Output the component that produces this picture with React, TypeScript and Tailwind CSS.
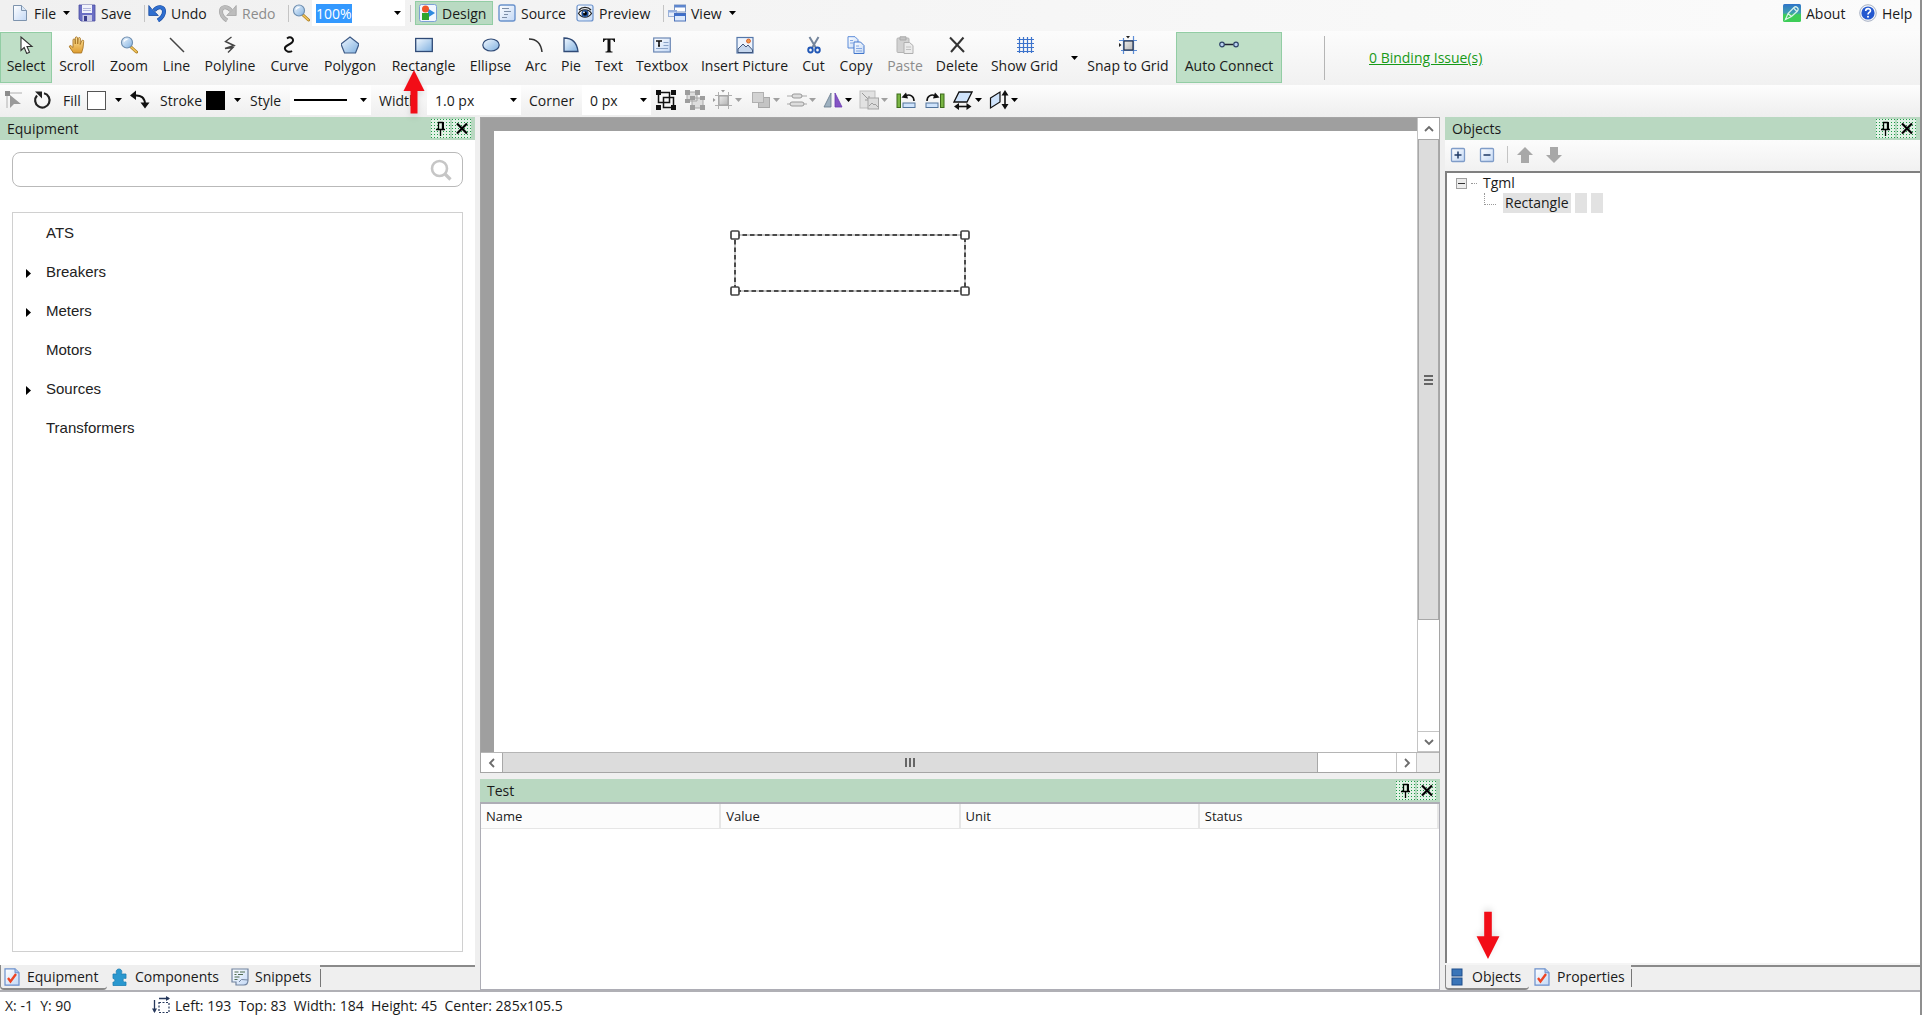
import React from "react";

type IconProps = { className?: string; children?: React.ReactNode; box?: string };

function Svg({ className = "size-[18px]", box = "0 0 18 18", children }: IconProps) {
  return (
    <svg viewBox={box} className={`${className} shrink-0`} fill="none" aria-hidden="true">
      {children}
    </svg>
  );
}

// gradients shared by all toolbar icons
function Gradients() {
  return (
    <svg width="0" height="0" className="absolute" aria-hidden="true">
      <defs>
        <linearGradient id="gBlue" x1="0" y1="0" x2="1" y2="1">
          <stop offset="0" stopColor="#f3f9ff" />
          <stop offset="1" stopColor="#7fb0e0" />
        </linearGradient>
        <linearGradient id="gSoft" x1="0" y1="0" x2="1" y2="1">
          <stop offset="0" stopColor="#ffffff" />
          <stop offset="1" stopColor="#c3d8f5" />
        </linearGradient>
        <linearGradient id="gGray" x1="0" y1="0" x2="1" y2="1">
          <stop offset="0" stopColor="#ececec" />
          <stop offset="1" stopColor="#b5b5b5" />
        </linearGradient>
        <linearGradient id="gHand" x1="0" y1="0" x2="0" y2="1">
          <stop offset="0" stopColor="#ffe6a0" />
          <stop offset="1" stopColor="#dd9c2e" />
        </linearGradient>
        <linearGradient id="gAbout" x1="0" y1="0" x2="0" y2="1">
          <stop offset="0" stopColor="#2f74c9" />
          <stop offset="0.5" stopColor="#3f9fb0" />
          <stop offset="0.6" stopColor="#3dcd58" />
          <stop offset="1" stopColor="#3dcd58" />
        </linearGradient>
        <pattern id="dots" width="3" height="3" patternUnits="userSpaceOnUse">
          <rect width="3" height="3" fill="#e2f2e6" />
          <rect width="1" height="1" fill="#1f9a48" />
        </pattern>
      </defs>
    </svg>
  );
}

function Caret({ className = "text-black" }: { className?: string }) {
  return (
    <svg viewBox="0 0 7 4" className={`h-1 w-[7px] shrink-0 ${className}`} aria-hidden="true">
      <path d="M0 0h7L3.5 4z" fill="currentColor" />
    </svg>
  );
}

/* ---------- top bar icons ---------- */

const FileIcon = () => (
  <Svg>
    <path d="M2.500 1.500h8l5 5v10h-13z" fill="url(#gSoft)" stroke="#7d93ad" />
    <path d="M10.500 1.500v5h5" fill="#dce8f6" stroke="#7d93ad" />
  </Svg>
);

const SaveIcon = () => (
  <Svg>
    <path d="M1 1h16v16H3l-2-2z" fill="#6a6ec4" stroke="#4a4da0" strokeWidth=".8" />
    <path d="M4 1h10v8H4z" fill="#f0f2fb" />
    <path d="M5 4.500h8M5 6.500h8" stroke="#b3b8dc" />
    <path d="M4.500 11H14v6H4.500z" fill="#c9cbe6" />
    <path d="M6 12h3v5H6z" fill="#3a3d8c" />
  </Svg>
);

function TurnIcon({ color, edge, flip }: { color: string; edge: string; flip?: boolean }) {
  return (
    <Svg>
      <g transform={flip ? "matrix(-1 0 0 1 18 0)" : undefined}>
        <path d="M6 6.500c4-5 10-4 10 1 0 4-3 7-6 9" stroke={edge} strokeWidth="4" />
        <path d="M.8 1.500v10h9.500L7.500 8.600 4 5.400z" fill={color} stroke={edge} strokeWidth=".8" />
        <path d="M6 6.500c4-5 10-4 10 1 0 4-3 7-6 9" stroke={color} strokeWidth="2.800" />
      </g>
    </Svg>
  );
}

const LensIcon = ({ className }: { className?: string }) => (
  <Svg className={className}>
    <path d="M11 11l5.500 5" stroke="#a87a1e" strokeWidth="3" strokeLinecap="round" />
    <path d="M11 11l5.300 4.800" stroke="#f0c35a" strokeWidth="1.600" strokeLinecap="round" />
    <circle cx="7" cy="6.500" r="5.500" fill="url(#gBlue)" stroke="#6f8fb0" strokeWidth="1.200" />
    <path d="M4 5.500c.6-1.600 2-2.300 3.500-2.200" stroke="#fff" strokeWidth="1.300" />
  </Svg>
);

const DesignIcon = () => (
  <Svg>
    <rect x=".5" y=".5" width="17" height="17" rx="2" fill="#f2f7ff" stroke="#7da0d6" />
    <path d="M9 4.500l7 4.500-7 4.500z" fill="#2e8ae0" />
    <circle cx="6.500" cy="5" r="3.500" fill="#f0562a" />
    <rect x="3" y="9" width="7" height="7" fill="#2ea32c" />
  </Svg>
);

const SourceIcon = () => (
  <Svg>
    <rect x="1" y="1" width="16" height="16" rx="2" fill="url(#gSoft)" stroke="#6a92cc" strokeWidth="1.400" />
    <path d="M4 4.500h7M6 7.500h7M6 10.500h4M4 13.500h5" stroke="#7d8ea6" strokeWidth="1.200" />
  </Svg>
);

const PreviewIcon = () => (
  <Svg>
    <rect x="1" y="1" width="16" height="16" rx="2" fill="url(#gSoft)" stroke="#6a92cc" strokeWidth="1.200" />
    <path d="M2.500 9.500C5 5 12.500 4.500 15.500 9.500 12 14.500 6 14.500 2.500 9.500z" fill="#fff" stroke="#222" strokeWidth="1.200" />
    <circle cx="9" cy="9.500" r="3.600" fill="#1e4f9a" />
    <circle cx="9" cy="9.500" r="1.900" fill="#000" />
    <circle cx="8" cy="8.300" r=".9" fill="#fff" />
    <path d="M3 6C6 2.500 12 2.500 15 6" stroke="#222" strokeWidth="1.300" />
  </Svg>
);

const ViewIcon = () => (
  <Svg>
    <rect x="6.500" y="1" width="11" height="7" fill="#fff" stroke="#7c95bf" />
    <path d="M6.500 1h11v2.500h-11z" fill="#5d86cf" />
    <rect x=".5" y="6.500" width="8" height="6" fill="#e6eefb" stroke="#9bb1d6" />
    <path d="M.5 6.500h8v2h-8z" fill="#93aee0" />
    <rect x="6.500" y="9.500" width="11" height="7.500" fill="#dce9fc" stroke="#4a70b8" />
    <path d="M6.500 9.500h11V12h-11z" fill="#3f6fca" />
  </Svg>
);

const AboutIcon = () => (
  <Svg>
    <rect width="18" height="18" rx="1.500" fill="url(#gAbout)" />
    <path d="M2.500 15.500l2.500-6 6-6c2-2 5.500 1 3.500 3.500l-6 5.500zM5 9.500l3.500 3M11 4.500l3 3" stroke="#d9f2ea" strokeWidth="1.200" />
  </Svg>
);

const HelpIcon = () => (
  <Svg>
    <circle cx="9" cy="9" r="8.300" fill="#f4f6fa" stroke="#a7b1c4" />
    <circle cx="9" cy="9" r="6.600" fill="#2458cf" />
    <path d="M6.700 7c0-3.200 4.800-3 4.800-.3C11.500 8.500 9 8.500 9 10.500" stroke="#fff" strokeWidth="1.600" />
    <circle cx="9" cy="12.800" r="1" fill="#fff" />
  </Svg>
);

/* ---------- drawing tool icons ---------- */

const tools: Record<string, React.ReactNode> = {
  select: (
    <path d="M4 1v13.500l3.200-3 2.500 6 2.800-1.200L10 10.500h5z" fill="#fff" stroke="#333" strokeWidth="1.100" />
  ),
  scroll: (
    <path
      d="M5.500 17L1.500 11c-.6-1.500 1-2 2-.8L5 11.500V4c0-1.500 2-1.500 2.100 0L7.300 8V2c0-1.500 2.100-1.500 2.200 0L9.700 8l.6-5.500c.2-1.400 2.100-1.200 2.100.2L12.200 8.500l1.500-3.700c.5-1.200 2.300-.7 2 .6L15 12l-1.500 5z"
      fill="url(#gHand)"
      stroke="#a87524"
      strokeWidth=".9"
    />
  ),
  line: <path d="M2 2l14 14" stroke="#444" strokeWidth="1.500" />,
  polyline: <path d="M10.500 1L4.500 5.500l8.500 4-9 3 8-1-5 5" stroke="#444" strokeWidth="1.400" />,
  curve: (
    <path d="M6 2.500c4-3 8 1 5 4S3 9.500 4 13c.8 3 5 3.500 7 2" stroke="#111" strokeWidth="2" />
  ),
  polygon: <path d="M9 1l9 7-3.500 9h-11L0 8z" fill="url(#gBlue)" stroke="#3d5a86" strokeWidth="1.200" />,
  rectangle: <rect x=".7" y="2.500" width="16.600" height="13" fill="url(#gBlue)" stroke="#2f4a76" strokeWidth="1.300" />,
  ellipse: <ellipse cx="9" cy="9" rx="8.200" ry="6" fill="url(#gBlue)" stroke="#2f4a76" strokeWidth="1.200" />,
  arc: <path d="M2 3c8 0 12 5 13 13" stroke="#333" strokeWidth="1.500" />,
  pie: <path d="M2 2c8 0 13 5 14 13.500H2z" fill="url(#gBlue)" stroke="#2f4a76" strokeWidth="1.300" />,
  text: (
    <path d="M3 2.500h12V6h-1c-.3-1.600-1-2.200-3.500-2.200V14c0 1.200.5 1.500 2 1.600v.9h-7v-.9c1.500-.1 2-.4 2-1.600V3.800C5 3.800 4.300 4.400 4 6H3z" fill="#111" />
  ),
  textbox: (
    <>
      <rect x=".7" y="2" width="16.600" height="14" fill="url(#gSoft)" stroke="#6c88b4" strokeWidth="1.200" />
      <path d="M3 5h6M6 5v5M5 10h2" stroke="#111" strokeWidth="1.600" />
      <path d="M10.500 6.500h5M10.500 9.500h5M3 12.500h12" stroke="#8ba4c8" />
    </>
  ),
  picture: (
    <>
      <rect x="1" y="1.500" width="16" height="15.500" fill="#eef4fd" stroke="#5577aa" strokeWidth="1.200" />
      <circle cx="12.500" cy="5" r="2" fill="#f29a4a" stroke="#cf5320" strokeWidth=".8" />
      <path d="M2 13l5-5 3 3 2-2 4.500 5v2.500H2z" fill="#c6d7ee" stroke="#31476e" strokeWidth=".9" />
    </>
  ),
  cut: (
    <>
      <path d="M4.500 1L11 12M13.500 1L7 12" stroke="#74859c" strokeWidth="2" />
      <ellipse cx="5.500" cy="14" rx="2.300" ry="2.500" stroke="#1f56b5" strokeWidth="1.900" />
      <ellipse cx="12.500" cy="14" rx="2.300" ry="2.500" stroke="#1f56b5" strokeWidth="1.900" />
    </>
  ),
  copy: (
    <>
      <path d="M1 .7h7l3 3V12H1z" fill="url(#gSoft)" stroke="#5b8bd8" />
      <path d="M7 6h6.500l3.500 3.500v8H7z" fill="url(#gSoft)" stroke="#4377cc" />
      <path d="M3 4.500h3M3 7h3M9 10h3M9 12.500h6M9 15h6" stroke="#84a8e4" />
    </>
  ),
  paste: (
    <>
      <rect x="1" y="2" width="12" height="14.500" rx="1" fill="#d2d2d2" stroke="#b5b5b5" />
      <path d="M4 .8h6V4H4z" fill="#c4c4c4" stroke="#aaa" />
      <path d="M8 6.500h5.500l3.500 3v8H8z" fill="#ebebeb" stroke="#b0b0b0" />
      <path d="M10 11h5M10 13.500h5" stroke="#c0c0c0" />
    </>
  ),
  delete: <path d="M2 1.500l14 14.500M15.500 1.500L3 16" stroke="#333" strokeWidth="2" />,
  grid: (
    <path d="M3.500 1v16M7.500 1v16M11.500 1v16M15.500 1v16M1 3.500h17M1 7.500h17M1 11.500h17M1 15.500h17" stroke="#3c73cc" strokeWidth="1.200" />
  ),
  snap: (
    <>
      <path d="M4.500 2v16M14.500 0v18M0 4.500h18M2 14.500h16" stroke="#5b8dd8" strokeWidth="1.200" />
      <rect x="5" y="5" width="9" height="9" fill="url(#gGray)" stroke="#26334c" strokeWidth="1.200" />
      <path d="M7 0h4L9 2.500zM0 7v4l2.500-2z" fill="#222" />
    </>
  ),
  connect: (
    <>
      <path d="M4 8.500h10" stroke="#223" strokeWidth="1.500" />
      <circle cx="3" cy="8.500" r="2.300" fill="#b9d0f0" stroke="#2f4468" strokeWidth="1.200" />
      <circle cx="17" cy="8.500" r="2.300" fill="#b9d0f0" stroke="#2f4468" strokeWidth="1.200" />
    </>
  ),
};

/* ---------- generic controls ---------- */

function MenuButton({
  icon,
  label,
  className,
  caret,
  disabled,
}: {
  icon: React.ReactNode;
  label: string;
  className: string;
  caret?: boolean;
  disabled?: boolean;
}) {
  return (
    <button
      disabled={disabled}
      className={`flex h-6 shrink-0 items-center gap-[5px] whitespace-nowrap disabled:text-[#8c8c8c] ${className}`}
    >
      {icon}
      {label}
      {caret && <span className="ml-0.5"><Caret /></span>}
    </button>
  );
}

function Sep({ className }: { className: string }) {
  return (
    <div className={`flex shrink-0 justify-center ${className}`}>
      <div className="h-[17px] w-px shrink-0 bg-[#c4c4c4]" />
    </div>
  );
}

function ToolButton({
  icon,
  label,
  className,
  active,
  disabled,
  children,
}: {
  icon: React.ReactNode;
  label: string;
  className: string;
  active?: boolean;
  disabled?: boolean;
  children?: React.ReactNode;
}) {
  return (
    <button
      disabled={disabled}
      className={`relative flex h-[51px] shrink-0 flex-col items-center gap-0.5 whitespace-nowrap border pt-[3px] disabled:text-[#8c8c8c] ${
        active ? "border-[#92cda4] bg-[#bfdfc7]" : "border-transparent"
      } ${className}`}
    >
      {icon}
      <span className="leading-5">{label}</span>
      {children}
    </button>
  );
}

function RedArrow({ className }: { className: string }) {
  return (
    <svg viewBox="0 0 22 46" className={`pointer-events-none absolute z-10 drop-shadow-md ${className}`} aria-hidden="true">
      <path d="M11 0l10.500 21H14.500v22.500h-7V21H.5z" fill="#f20d17" />
    </svg>
  );
}

function PanelHeader({ title }: { title: string }) {
  return (
    <div className="flex h-[23px] shrink-0 items-center bg-[#b9d8c1] pl-[7px] pr-1">
      <h2 className="flex-1">{title}</h2>
      <button aria-label={`Pin ${title}`} className="mr-0.5">
        <Svg className="size-[19px]" box="0 0 19 19">
          <rect width="19" height="19" fill="url(#dots)" />
          <path d="M7 3h6v7H7z" fill="#e2f2e6" />
          <path d="M7.500 10V3.500h4V10M5 10.500h9M9.500 11v6" stroke="#000" strokeWidth="1.300" />
          <path d="M11 3h2v7h-2z" fill="#000" />
        </Svg>
      </button>
      <button aria-label={`Close ${title}`}>
        <Svg className="size-[19px]" box="0 0 19 19">
          <rect width="19" height="19" fill="url(#dots)" />
          <path d="M5 4.500l10 10M15 4.500l-10 10" stroke="#000" strokeWidth="2.200" />
        </Svg>
      </button>
    </div>
  );
}

function Tab({
  icon,
  label,
  active,
  className,
}: {
  icon: React.ReactNode;
  label: string;
  active?: boolean;
  className: string;
}) {
  return (
    <button
      role="tab"
      aria-selected={!!active}
      className={`flex shrink-0 items-center gap-1.5 whitespace-nowrap ${
        active ? "rounded-b border-b-2 border-l border-[#8a8a8a]" : "border-b-2 border-transparent"
      } ${className}`}
    >
      {icon}
      {label}
    </button>
  );
}

const CheckDocIcon = () => (
  <Svg>
    <path d="M2 .8h10l4 4v12.400H2z" fill="url(#gSoft)" stroke="#6a8fcb" strokeWidth="1.200" />
    <path d="M12 .8v4h4" fill="#a9c4ec" stroke="#6a8fcb" />
    <path d="M5 10l2.500 3.500L13 6" stroke="#ee4423" strokeWidth="2.300" />
  </Svg>
);

const PuzzleIcon = () => (
  <Svg>
    <path d="M2 6h4C4.500 4.500 5 1 8 1s3.500 3.500 2 5h5v4.500c-4-1.500-4 4.500 0 3.500v3.500H2V14c2.500.5 2.500-3.500 0-3.500z" fill="#2a98cf" stroke="#1c7fb4" strokeWidth=".8" />
  </Svg>
);

const SnippetIcon = () => (
  <Svg>
    <path d="M1 1h16v11c0 3-1 5-4 5H5v-3H1z" fill="url(#gSoft)" stroke="#71839f" strokeWidth="1.200" />
    <path d="M3.500 4h4M9 4h5M3.500 6.500h2M7 6.500h5M3.500 9h5M3.500 11.500h3" stroke="#4f6a4f" />
    <path d="M8 14l2.500-2.500L17 12" stroke="#71839f" />
  </Svg>
);

const ObjectsIcon = () => (
  <Svg>
    <rect x="4" y="1" width="10" height="7" fill="#3a75b8" stroke="#1f4f8c" />
    <rect x="4" y="10" width="10" height="7" fill="#3a75b8" stroke="#1f4f8c" />
  </Svg>
);

/* ---------- bars ---------- */

function MenuBar() {
  return (
    <header className="flex h-[31px] shrink-0 items-start bg-linear-to-r from-[#f0f0f0] to-[#fbfbfb] pl-[11px] pr-1.5">
      <nav className="flex flex-1 items-center">
        <MenuButton icon={<FileIcon />} label="File" caret className="w-[67px]" />
        <MenuButton icon={<SaveIcon />} label="Save" className="w-[62px]" />
        <Sep className="w-2" />
        <MenuButton icon={<TurnIcon color="#2f6fd0" edge="#1b4c9f" />} label="Undo" className="w-[71px]" />
        <MenuButton icon={<TurnIcon color="#bdbdbd" edge="#a3a3a3" flip />} label="Redo" disabled className="w-[65px]" />
        <Sep className="w-2" />
        <LensIcon className="mr-0.5 size-[18px]" />
        <div className="flex h-[26px] w-[93px] items-center bg-white pl-1 pr-1">
          <input aria-label="Zoom level" defaultValue="100%" className="h-[19px] w-9 bg-[#3399ff] text-white outline-none" />
          <button aria-label="Zoom levels" className="ml-auto flex h-full items-center">
            <Caret />
          </button>
        </div>
        <Sep className="w-2.5" />
        <MenuButton icon={<DesignIcon />} label="Design" className="mr-[5px] w-[78px] border border-[#92cda4] bg-[#b9dac2] pl-[3px]" />
        <MenuButton icon={<SourceIcon />} label="Source" className="w-[78px]" />
        <MenuButton icon={<PreviewIcon />} label="Preview" className="w-[82px]" />
        <Sep className="w-2.5" />
        <MenuButton icon={<ViewIcon />} label="View" caret className="" />
      </nav>
      <div className="flex items-center pt-px">
        <MenuButton icon={<AboutIcon />} label="About" className="w-[76px]" />
        <MenuButton icon={<HelpIcon />} label="Help" className="w-[55px]" />
      </div>
    </header>
  );
}

function ToolBar() {
  return (
    <div className="flex h-[54px] shrink-0 items-start bg-linear-to-b from-[#fcfcfc] to-[#f1f1f1] pt-px">
      <ToolButton icon={<Svg>{tools.select}</Svg>} label="Select" active className="w-[52px]" />
      <ToolButton icon={<Svg>{tools.scroll}</Svg>} label="Scroll" className="w-[50px]" />
      <ToolButton icon={<LensIcon />} label="Zoom" className="w-[54px]" />
      <ToolButton icon={<Svg>{tools.line}</Svg>} label="Line" className="w-[41px]" />
      <ToolButton icon={<Svg>{tools.polyline}</Svg>} label="Polyline" className="w-[66px]" />
      <ToolButton icon={<Svg>{tools.curve}</Svg>} label="Curve" className="w-[53px]" />
      <ToolButton icon={<Svg>{tools.polygon}</Svg>} label="Polygon" className="w-[68px]" />
      <ToolButton icon={<Svg>{tools.rectangle}</Svg>} label="Rectangle" className="w-[79px]">
        <RedArrow className="left-[18px] top-[37px] h-[46px] w-[22px]" />
      </ToolButton>
      <ToolButton icon={<Svg>{tools.ellipse}</Svg>} label="Ellipse" className="w-[55px]" />
      <ToolButton icon={<Svg>{tools.arc}</Svg>} label="Arc" className="w-[36px]" />
      <ToolButton icon={<Svg>{tools.pie}</Svg>} label="Pie" className="w-[34px]" />
      <ToolButton icon={<Svg>{tools.text}</Svg>} label="Text" className="w-[42px]" />
      <ToolButton icon={<Svg>{tools.textbox}</Svg>} label="Textbox" className="w-[64px]" />
      <ToolButton icon={<Svg>{tools.picture}</Svg>} label="Insert Picture" className="w-[101px]" />
      <ToolButton icon={<Svg>{tools.cut}</Svg>} label="Cut" className="w-[37px]" />
      <ToolButton icon={<Svg>{tools.copy}</Svg>} label="Copy" className="w-[48px]" />
      <ToolButton icon={<Svg>{tools.paste}</Svg>} label="Paste" disabled className="w-[50px]" />
      <ToolButton icon={<Svg>{tools.delete}</Svg>} label="Delete" className="w-[54px]" />
      <ToolButton icon={<Svg>{tools.grid}</Svg>} label="Show Grid" className="w-[81px]" />
      <button aria-label="Grid options" className="flex h-[51px] w-[18px] shrink-0 items-center justify-center">
        <Caret />
      </button>
      <ToolButton icon={<Svg>{tools.snap}</Svg>} label="Snap to Grid" className="mr-[3px] w-[90px]" />
      <ToolButton
        icon={<Svg className="h-[18px] w-5" box="0 0 20 18">{tools.connect}</Svg>}
        label="Auto Connect"
        active
        className="w-[106px]"
      />
      <div className="ml-[42px] mt-1 h-11 w-px shrink-0 bg-[#b5b5b5]" />
      <a href="#issues" className="ml-11 mt-4 whitespace-nowrap leading-5 text-[#189a18] underline">
        0 Binding Issue(s)
      </a>
    </div>
  );
}

function Combo({ id, value, className }: { id: string; value: string; className: string }) {
  return (
    <div className={`relative h-[30px] shrink-0 bg-white ${className}`}>
      <select id={id} className="size-full appearance-none pl-2 outline-none">
        <option>{value}</option>
      </select>
      <span className="pointer-events-none absolute right-1 top-[13px]">
        <Caret />
      </span>
    </div>
  );
}

function IconButton({
  label,
  caret,
  disabled,
  className,
  children,
}: {
  label: string;
  caret?: boolean;
  disabled?: boolean;
  className: string;
  children: React.ReactNode;
}) {
  return (
    <button aria-label={label} disabled={disabled} className={`flex h-6 shrink-0 items-center ${className}`}>
      <Svg className="size-5" box="0 0 20 20">
        {children}
      </Svg>
      {caret && <Caret className={disabled ? "text-[#a0a0a0]" : "text-black"} />}
    </button>
  );
}

function FormatBar() {
  return (
    <div className="flex h-8 shrink-0 items-center bg-linear-to-b from-[#fdfdfd] to-[#eeeeee] pb-0.5 pl-1">
      <IconButton label="Edit points" disabled className="w-7">
        <path d="M3 3h15M3 3v15" stroke="#b0b0b0" />
        <path d="M1 1h5v5H1z" fill="#8c8c8c" />
        <path d="M6 5v13l4-4h7z" fill="#9a9a9a" />
      </IconButton>
      <IconButton label="Rotate" className="w-[31px]">
        <path d="M5 5.500a7.200 7.200 0 1 0 7-2.200" stroke="#222" strokeWidth="2.200" />
        <path d="M3 1.500h7v7z" fill="#222" />
      </IconButton>
      <label htmlFor="fill" className="w-6">Fill</label>
      <button id="fill" className="flex h-5 w-[43px] shrink-0 items-center justify-between">
        <span className="size-[19px] border border-[#555] bg-white" />
        <span className="mr-2"><Caret /></span>
      </button>
      <IconButton label="Swap colors" className="w-[30px]">
        <path d="M5 5.500c6-.5 9.500 2 10 8" stroke="#111" strokeWidth="2" />
        <path d="M0 5.500l6-5v9.500zM10.500 12.500h9l-4.500 6z" fill="#111" />
      </IconButton>
      <label htmlFor="stroke" className="w-[46px]">Stroke</label>
      <button id="stroke" className="flex h-5 w-11 shrink-0 items-center justify-between">
        <span className="size-[19px] bg-black" />
        <span className="mr-[9px]"><Caret /></span>
      </button>
      <label htmlFor="style" className="w-10">Style</label>
      <div className="relative h-[30px] w-[81px] shrink-0 bg-white">
        <select id="style" className="size-full appearance-none text-transparent outline-none">
          <option>Solid</option>
        </select>
        <span className="pointer-events-none absolute inset-x-1 top-[13px] flex items-center justify-between">
          <span className="h-0.5 w-[53px] bg-black" />
          <Caret />
        </span>
      </div>
      <label htmlFor="width" className="ml-2 w-12">Width</label>
      <Combo id="width" value="1.0 px" className="w-[94px]" />
      <label htmlFor="corner" className="ml-2 w-[53px]">Corner</label>
      <Combo id="corner" value="0 px" className="mr-[5px] w-[69px]" />

      <IconButton label="Group" className="w-[29px]">
        <path d="M2.500 2.500h11v10h-11zM7.500 7.500h10v10h-10z" stroke="#111" strokeWidth="1.500" />
        <path d="M0 0h5v5H0zM15 0h5v5h-5zM0 15h5v5H0zM15 15h5v5h-5z" fill="#111" />
      </IconButton>
      <IconButton label="Ungroup" disabled className="w-7">
        <path d="M2 2h10v9H2zM7 8h11v10H7z" fill="#ddd" stroke="#a8a8a8" />
        <path d="M0 0h5v5H0zM10 0h5v5h-5zM0 9h5v4H0zM5 6h5v4H5zM15 6h5v4h-5zM5 15h5v5H5zM15 15h5v5h-5z" fill="#9d9d9d" />
      </IconButton>
      <IconButton label="Snap" disabled caret className="w-[38px] gap-0.5">
        <path d="M5.500 2v17M15.500 2v17M2 5.500h17M2 15.500h17" stroke="#b0b0b0" />
        <rect x="6" y="6" width="9" height="9" fill="url(#gGray)" stroke="#a0a0a0" />
        <path d="M8 0h4l-2 2.500zM0 8v4l2.500-2z" fill="#999" />
      </IconButton>
      <IconButton label="Order" disabled caret className="w-9 gap-0.5">
        <rect x="7.500" y="7.500" width="11" height="10" fill="#c4c4c4" stroke="#a8a8a8" />
        <rect x="1.500" y="2.500" width="11" height="10" fill="#d2d2d2" stroke="#b0b0b0" />
      </IconButton>
      <IconButton label="Align" disabled caret className="w-9 gap-0.5">
        <path d="M0 6h20M0 14h20" stroke="#aaa" />
        <rect x="5" y="4" width="10" height="4" rx="2" fill="#ddd" stroke="#999" />
        <rect x="3" y="12" width="14" height="4" rx="2" fill="#ddd" stroke="#999" />
      </IconButton>
      <IconButton label="Flip" caret className="w-9 gap-0.5">
        <path d="M8 3v14H1z" fill="#9db0bf" stroke="#66788a" strokeWidth=".8" />
        <path d="M12 3v14h7z" fill="#8454c4" stroke="#6a3bb0" strokeWidth=".8" />
      </IconButton>
      <IconButton label="Convert" disabled caret className="w-[37px] gap-0.5">
        <rect x="1" y="1" width="15" height="17" fill="#e2e2e2" stroke="#bdbdbd" />
        <path d="M3 3l7 7M10 6v4H6" stroke="#9a9a9a" />
        <rect x="9" y="8" width="10.500" height="11" fill="#dcdcdc" stroke="#a5a5a5" />
        <path d="M10 16l3-3 2 2 1-1 3 3" stroke="#a0a0a0" />
      </IconButton>
      <IconButton label="Rotate left" className="w-[29px]">
        <rect x="1" y="4" width="3.500" height="13.500" fill="#79b543" stroke="#3c6b1b" />
        <rect x="7" y="13" width="12" height="4.500" fill="#cfe3fb" stroke="#53759c" />
        <path d="M18 11c0-5-4-7-8-5.500" stroke="#111" strokeWidth="1.600" />
        <path d="M5.500 7.500L10 2.500l2 6z" fill="#111" />
      </IconButton>
      <IconButton label="Rotate right" className="w-7">
        <rect x="15.500" y="4" width="3.500" height="13.500" fill="#79b543" stroke="#3c6b1b" />
        <rect x="1" y="13" width="12" height="4.500" fill="#cfe3fb" stroke="#53759c" />
        <path d="M2 11c0-5 4-7 8-5.500" stroke="#111" strokeWidth="1.600" />
        <path d="M14.500 7.500L10 2.500l-2 6z" fill="#111" />
      </IconButton>
      <IconButton label="Skew horizontal" caret className="w-9 gap-0.5">
        <path d="M6 2h13l-5 10H1z" fill="#cfe3fb" stroke="#111" strokeWidth="1.300" />
        <path d="M4 16.500h11" stroke="#111" strokeWidth="1.600" />
        <path d="M1 16.500L6 13v7zM18.500 16.500l-5-3.500v7z" fill="#111" />
      </IconButton>
      <IconButton label="Skew vertical" caret className="w-9 gap-0.5">
        <path d="M1.500 8L11 2v10l-9.500 6z" fill="#cfe3fb" stroke="#111" strokeWidth="1.200" />
        <path d="M16 4v12" stroke="#111" strokeWidth="1.600" />
        <path d="M16 0l-3.500 5.500h7zM16 19.500L12.500 14h7z" fill="#111" />
      </IconButton>
    </div>
  );
}

/* ---------- panels ---------- */

const equipment = [
  { name: "ATS", expandable: false },
  { name: "Breakers", expandable: true },
  { name: "Meters", expandable: true },
  { name: "Motors", expandable: false },
  { name: "Sources", expandable: true },
  { name: "Transformers", expandable: false },
];

function EquipmentPanel() {
  return (
    <aside className="flex w-[475px] shrink-0 flex-col bg-white">
      <PanelHeader title="Equipment" />
      <div className="flex flex-1 flex-col px-3 pb-[13px] pt-3">
        <div className="flex h-[35px] items-center rounded-lg border border-[#b9b9b9] pr-2.5">
          <input aria-label="Search equipment" className="h-full flex-1 pl-3 outline-none" />
          <Svg className="size-[22px]" box="0 0 22 22">
            <circle cx="9.500" cy="9.500" r="7.500" stroke="#c6c6c6" strokeWidth="2.600" />
            <path d="M14.500 14.500l6 6" stroke="#c6c6c6" strokeWidth="3.200" />
          </Svg>
        </div>
        <ul className="mt-[25px] flex-1 border border-[#d0d0d0] pt-px font-['Liberation_Sans',sans-serif] text-[15px] text-[#222]">
          {equipment.map((item) => (
            <li key={item.name}>
              <button className="flex h-[39px] w-full items-center pl-[13px] text-left">
                <span className="w-5">
                  {item.expandable && (
                    <svg viewBox="0 0 5 9" className="mt-0.5 h-[9px] w-[5px]" aria-hidden="true">
                      <path d="M0 0l5 4.500L0 9z" fill="#000" />
                    </svg>
                  )}
                </span>
                {item.name}
              </button>
            </li>
          ))}
        </ul>
      </div>
      <div role="tablist" className="flex h-[25px] shrink-0 bg-[#efefef]">
        <Tab icon={<CheckDocIcon />} label="Equipment" active className="w-[107px] pl-[2px]" />
        <Tab icon={<PuzzleIcon />} label="Components" className="w-[123px] pl-1" />
        <Tab icon={<SnippetIcon />} label="Snippets" className="w-[90px] pl-px" />
        <div className="flex-1 border-t-2 border-[#8a8a8a]">
          <div className="mt-0.5 h-[18px] w-px bg-[#777]" />
        </div>
      </div>
    </aside>
  );
}

function ScrollArrow({ label, d, className }: { label: string; d: string; className: string }) {
  return (
    <button aria-label={label} className={`flex shrink-0 items-center justify-center border-[#c4c4c4] bg-white ${className}`}>
      <svg viewBox="0 0 10 10" className="size-2.5" fill="none" aria-hidden="true">
        <path d={d} stroke="#6c6c6c" strokeWidth="1.800" />
      </svg>
    </button>
  );
}

const handles = [
  [4, 4],
  [234, 4],
  [4, 60],
  [234, 60],
];

function Canvas() {
  return (
    <section className="flex min-h-0 flex-1 flex-col border border-[#a5a5a5]">
      <div className="flex min-h-0 flex-1">
        <div className="flex-1 bg-[#9f9f9f] pl-[13px] pt-[13px]">
          <div className="relative size-full bg-white">
            <svg viewBox="-2 -2 242 68" className="absolute left-[235px] top-[98px] h-[68px] w-[242px]" fill="none" aria-label="Rectangle shape">
              <rect x="4" y="4" width="230" height="56" stroke="#c9c9c9" strokeWidth="2" />
              <rect x="4" y="4" width="230" height="56" stroke="#4a4a4a" strokeWidth="2" strokeDasharray="4.500 3" />
              {handles.map(([x, y]) => (
                <rect key={`${x}-${y}`} x={x - 4} y={y - 4} width="8" height="8" rx="1.200" fill="#fff" stroke="#444" strokeWidth="1.700" />
              ))}
            </svg>
          </div>
        </div>
        <div className="flex w-[22px] shrink-0 flex-col border-l border-[#c4c4c4] bg-white">
          <ScrollArrow label="Scroll up" d="M1 7l4-4 4 4" className="h-[21px]" />
          <div className="flex basis-[481px] items-center justify-center border border-[#a8a8a8] bg-[#dcdcdc]">
            <div className="h-[10px] w-[9px] border-y-2 border-[#666]">
              <div className="mt-0.5 h-0.5 bg-[#666]" />
            </div>
          </div>
          <div className="flex-1" />
          <ScrollArrow label="Scroll down" d="M1 3l4 4 4-4" className="h-[21px] border-y" />
        </div>
      </div>
      <div className="flex h-5 shrink-0 border-t border-[#b5b5b5] bg-white">
        <ScrollArrow label="Scroll left" d="M7 1L3 5l4 4" className="w-[21px]" />
        <div className="flex basis-[816px] items-center justify-center border-x border-[#a8a8a8] bg-[#dcdcdc]">
          <div className="h-[9px] w-[10px] border-x-2 border-[#666]">
            <div className="ml-0.5 h-full w-0.5 bg-[#666]" />
          </div>
        </div>
        <div className="flex-1" />
        <ScrollArrow label="Scroll right" d="M3 1l4 4-4 4" className="w-[21px] border-x" />
        <div className="w-[22px] shrink-0 bg-[#efefef]" />
      </div>
    </section>
  );
}

function TestPanel() {
  return (
    <section className="flex h-[211px] shrink-0 flex-col">
      <PanelHeader title="Test" />
      <div className="flex-1 border border-t-2 border-[#adadb5] bg-white">
        <table className="w-full table-fixed border-b border-[#e6e6e6] text-left text-[13px] leading-5">
          <thead>
            <tr className="h-6 bg-[#fcfcfc]">
              {["Name", "Value", "Unit", "Status"].map((name) => (
                <th key={name} className="border-r-2 border-[#e6e6e6] px-[5px] font-normal">
                  {name}
                </th>
              ))}
            </tr>
          </thead>
        </table>
      </div>
    </section>
  );
}

function ObjectsPanel() {
  return (
    <aside className="flex w-[475px] shrink-0 flex-col bg-[#f5f5f5]">
      <PanelHeader title="Objects" />
      <div className="flex h-[31px] shrink-0 items-center bg-linear-to-b from-[#fcfcfc] to-[#f1f1f1] pb-0.5 pl-1">
        {["M5.500 9h7M9 5.500v7", "M5.500 9h7"].map((d, i) => (
          <button key={d} aria-label={i === 0 ? "Expand all" : "Collapse all"} className="w-[29px]">
            <Svg>
              <rect x="2.500" y="2.500" width="13" height="13" rx="1" fill="url(#gSoft)" stroke="#7f9cc8" strokeWidth="1.300" />
              <path d={d} stroke="#1f3a66" strokeWidth="1.500" />
            </Svg>
          </button>
        ))}
        <Sep className="mr-2 w-px" />
        <button aria-label="Move up" disabled className="w-[29px]">
          <Svg>
            <path d="M9 1l8 8h-4v8H5V9H1z" fill="#a8a8a8" />
          </Svg>
        </button>
        <button aria-label="Move down" disabled>
          <Svg>
            <path d="M9 17l8-8h-4V1H5v8H1z" fill="#a8a8a8" />
          </Svg>
        </button>
      </div>
      <div role="tree" className="flex-1 border-l-2 border-t-2 border-[#808080] bg-white leading-5">
        <div role="treeitem" className="flex h-5 items-center pl-[9px]">
          <button aria-label="Collapse Tgml" className="flex size-[11px] items-center justify-center border border-[#a0a0a0] bg-[#ececec]">
            <span className="h-px w-[7px] bg-[#333]" />
          </button>
          <span className="ml-1 mr-1.5 w-1.5 border-t border-dotted border-[#999]" />
          Tgml
        </div>
        <div role="treeitem" className="flex h-5 items-center pl-[37px]">
          <span className="mb-2 mr-[7px] h-3 w-3 border-b border-l border-dotted border-[#999]" />
          <span className="bg-[#e2e2e2] px-0.5">Rectangle</span>
          <span className="ml-1 h-5 w-3 bg-[#e2e2e2]" />
          <span className="ml-1 h-5 w-3 bg-[#e2e2e2]" />
        </div>
      </div>
      <div role="tablist" className="relative mt-0.5 flex h-[25px] shrink-0 bg-[#efefef]">
        <RedArrow className="bottom-[31px] left-[31px] h-[50px] w-6 rotate-180" />
        <Tab icon={<ObjectsIcon />} label="Objects" active className="w-[84px] pl-[2px]" />
        <Tab icon={<CheckDocIcon />} label="Properties" className="w-[102px] pl-1" />
        <div className="flex-1 border-t-2 border-[#8a8a8a]">
          <div className="mt-0.5 h-[18px] w-px bg-[#777]" />
        </div>
      </div>
    </aside>
  );
}

function StatusBar() {
  return (
    <footer className="flex h-[25px] shrink-0 items-center border-t-2 border-[#b0b0b5] bg-white pl-[5px] pt-1 leading-5">
      <span className="w-[147px]">X: -1&nbsp; Y: 90</span>
      <Svg className="mr-[3px] size-5" box="0 0 20 20">
        <path d="M2.500 4v12M7 2.500h10" stroke="#27395c" strokeWidth="1.300" />
        <path d="M0 12.500h5L2.500 17zM14 0l4 2.500L14 5z" fill="#27395c" />
        <rect x="7" y="6.500" width="10" height="10" stroke="#27395c" strokeDasharray="2 1.500" strokeWidth="1.200" />
      </Svg>
      <span className="whitespace-pre">Left: 193  Top: 83  Width: 184  Height: 45  Center: 285x105.5</span>
    </footer>
  );
}

export default function App() {
  return (
    <div className="flex h-screen flex-col overflow-hidden border-r-2 border-[#8f8f8f] bg-[#efefef] font-['Open_Sans',sans-serif] text-[14px] text-[#1a1a1a]">
      <Gradients />
      <MenuBar />
      <ToolBar />
      <FormatBar />
      <main className="flex min-h-0 flex-1 gap-[5px]">
        <EquipmentPanel />
        <div className="flex min-w-0 flex-1 flex-col gap-1.5">
          <Canvas />
          <TestPanel />
        </div>
        <ObjectsPanel />
      </main>
      <StatusBar />
    </div>
  );
}
